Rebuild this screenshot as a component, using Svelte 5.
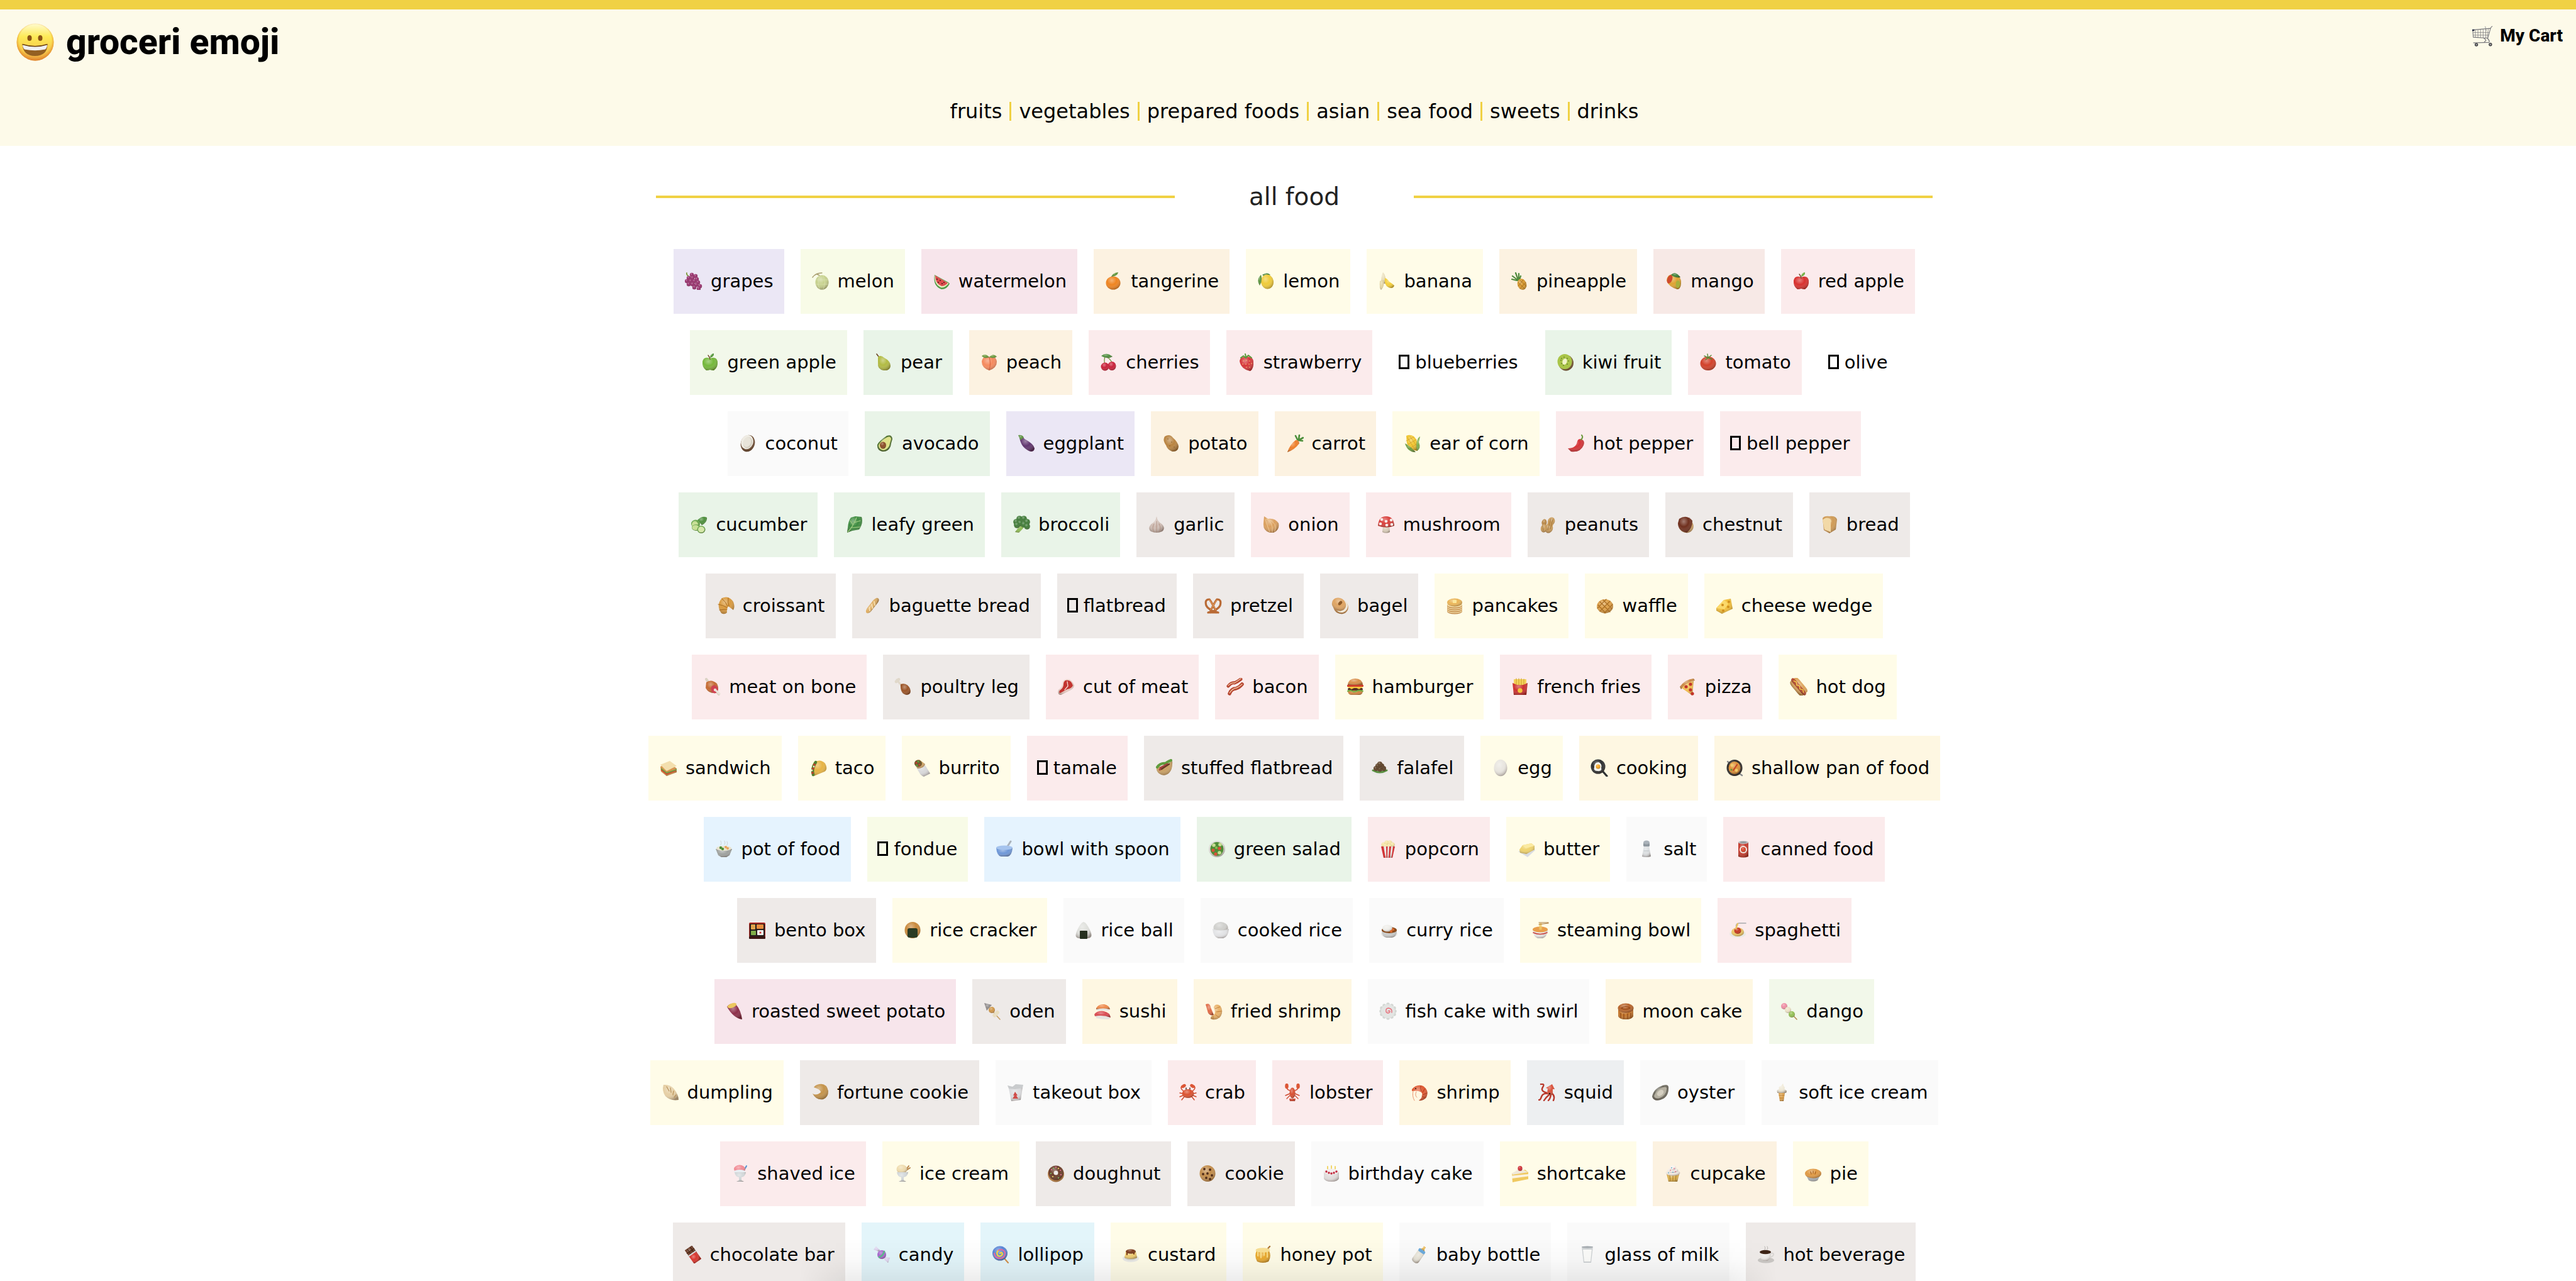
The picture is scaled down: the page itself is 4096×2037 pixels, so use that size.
<script>
  const c = (x, y, r, f) => `<circle cx="${x}" cy="${y}" r="${r}" fill="${f}"/>`;
  const e = (x, y, rx, ry, f, a = 0) =>
    `<ellipse cx="${x}" cy="${y}" rx="${rx}" ry="${ry}" fill="${f}" transform="rotate(${a} ${x} ${y})"/>`;
  const b = (x, y, rx, ry, f, a = 0) => e(x, y, rx, ry, f, a) + e(x, y, rx, ry, 'url(#shade)', a);
  const p = (d, f) => `<path d="${d}" fill="${f}"/>`;
  const s = (d, f) => p(d, f) + p(d, 'url(#shade)');
  const l = (d, f, w = 1.5) =>
    `<path d="${d}" fill="none" stroke="${f}" stroke-width="${w}" stroke-linecap="round" stroke-linejoin="round"/>`;
  const r = (x, y, w, h, f, q = 0) => `<rect x="${x}" y="${y}" width="${w}" height="${h}" rx="${q}" fill="${f}"/>`;
  const dots = (pts, rad, f) => pts.map(([x, y]) => c(x, y, rad, f)).join('');
  const balls = (pts, rad, f) => pts.map(([x, y]) => b(x, y, rad, rad, f)).join('');
  const turn = (a, inner) => `<g transform="rotate(${a} 14 14)">${inner}</g>`;

  const bowl = (f) => s('M2 14H26Q26 25 18 26H10Q2 25 2 14Z', f);
  const glass = s('M5 12H23Q22 19 16 20V25L20 27H8L12 25V20Q6 19 5 12Z', '#d3d8da');
  const plate = e(14, 20, 13, 6, '#e9e9e6') + e(14, 19, 10, 4, '#d2d2ce');

  const icons = {
    grapes:
      l('M3 1Q2 4 7 7', '#7c9b3a', 1.8) +
      balls([[11, 4], [17, 6], [6, 9], [12, 9], [19, 11], [3, 14], [9, 14], [15, 14], [21, 16], [6, 19], [12, 19], [18, 20], [15, 24], [24, 22], [22, 26]], 3.2, '#97306c'),
    melon: l('M1 8Q6 1 16 1M12 5L8 3', '#a79d6d', 1.4) + b(16, 16, 10.5, 11.5, '#c6d18c') + l('M12 6Q8 16 12 26M18 5Q23 16 18 27M7 12H26M7 19H26', '#dde4b5', 0.6),
    watermelon: p('M3 4Q0 22 14 27Q23 27 27 18L25 16Z', '#4e9a45') + p('M3.500 5Q2 20 14 24.500Q21 24 25.500 17.500Z', '#e5eabf') + p('M4 5Q4 18 14 22Q20 22 24 17Z', '#de4c4f') + dots([[7, 11], [12, 13], [9, 16], [15, 18], [18, 16]], 0.9, '#3a1a14'),
    tangerine: b(13, 17, 11.5, 10.5, '#ef8420') + s('M10 7Q12 1 21 0Q20 6 10 7Z', '#5e9438'),
    lemon: s('M8 4Q16 -1 21 4L13 8Z', '#3f7f35') + b(16, 15, 10, 11.5, '#efcb3a', -10) + s('M6 4Q-2 12 4 21Q9 12 6 4Z', '#5b9440'),
    banana: s('M8 0Q13 4 12 18L5 18Q5 6 8 0Z', '#eadfba') + s('M3 14Q2 26 5 28Q11 22 9 12Z', '#e4d6a4') + s('M11 9Q15 10 18 15Q23 18 26 21Q24 27 17 24Q9 20 11 9Z', '#f4cf3a'),
    pineapple: l('M12 13L3 6M12 12L8 1M13 12L13 2M10 13L2 11M14 12L16 6', '#4f8a3c', 2.2) + b(18, 19, 7, 9, '#d99a2e', -20) + l('M12 16L22 26M15 13L25 22M12 22L20 12M15 26L24 16', '#9a6519', 0.8),
    mango: s('M3 13Q4 2 15 3Q27 6 26 18Q25 27 20 27Q6 23 3 13Z', '#dfa331') + e(8, 11, 4, 7, '#cf4a2e', 20) + e(21, 19, 3.5, 6, '#a8b03c') + s('M10 4Q17 -3 25 8Q15 9 10 4Z', '#3d8037'),
    apple: s('M14 8Q24 4 26 13Q27 22 20 27Q17 27 14 26Q11 27 8 27Q1 22 2 13Q4 4 14 8Z', '#d8312f') + l('M14 9Q13 5 11 3', '#6b4423', 1.4) + s('M14 7Q14 1 20 0Q21 5 14 7Z', '#6cae3a'),
    greenApple: s('M14 8Q24 4 26 13Q27 22 20 27Q17 27 14 26Q11 27 8 27Q1 22 2 13Q4 4 14 8Z', '#74b83a') + l('M14 9Q13 5 11 3', '#6b4423', 1.4) + s('M14 7Q14 1 20 0Q21 5 14 7Z', '#4e9436'),
    pear: l('M6 5L3 1', '#6b4423', 1.6) + s('M5 5Q10 2 15 7Q25 12 25 20Q24 28 14 27Q4 25 5 16Z', '#b2bb43'),
    peach: s('M14 6Q24 2 26 13Q26 23 14 27Q2 23 2 13Q4 2 14 6Z', '#f58a5e') + l('M14 6Q17 16 14 26', '#d35f3c', 1) + s('M2 4Q8 -1 14 6Q6 9 2 4Z', '#6a9a3b') + s('M26 5Q20 -1 14 6Q22 9 26 5Z', '#6a9a3b'),
    cherries: l('M8 5Q6 12 8 17M10 5Q17 9 20 16', '#6f8f39', 1.3) + s('M2 4Q10 -3 20 5Q11 10 2 4Z', '#4f8e3e') + b(8, 21, 6.5, 6.5, '#c9213a') + b(19, 20, 6.5, 7, '#c9213a'),
    strawberry: s('M3 12Q4 5 14 5Q25 6 25 12Q26 24 20 28Q5 25 3 12Z', '#d6373b') + dots([[9, 12], [14, 11], [19, 12], [8, 17], [13, 17], [18, 17], [22, 16], [14, 22], [19, 22]], 0.8, '#f6cf7d') + l('M5 7L9 4L13 7L17 3L22 7M13 5L12 1', '#5c9a3a', 2),
    kiwi: b(15, 15, 12, 12.5, '#7a5a33') + e(13, 13, 11.5, 12, '#a9c548') + e(13, 13, 3.5, 5, '#f2f3cb', 20) + dots([[7, 11], [8, 16], [11, 19], [17, 17], [19, 12], [17, 8], [12, 6], [8, 8]], 0.7, '#37401c'),
    tomato: b(14, 16, 12.5, 11, '#d2402a') + l('M14 7L8 4M14 7L19 3M14 7L13 1M14 7L10 10M14 7L20 9', '#5a8c38', 1.5),
    coconut: b(14, 14, 11, 13.5, '#6c4a30', 20) + e(13, 12, 9.5, 11.5, '#efece4', 20) + e(14, 13, 7, 9, '#d5d0c2', 20) + e(13, 12, 6, 8, '#e8e4da', 20),
    avocado: s('M17 2Q25 -1 26 7Q24 13 23 19Q19 28 10 27Q1 25 2 16Q5 10 17 2Z', '#4d702c') + p('M18 4Q23 2 24 7Q22 13 21 18Q17 25 11 25Q4 23 4 17Q7 10 18 4Z', '#dfe28a') + b(11, 17, 5, 5.5, '#8a4b23'),
    eggplant: s('M3 4Q8 2 11 7Q26 15 27 22Q26 29 18 26Q5 20 3 4Z', '#61356f') + s('M1 1Q8 0 10 5Q7 6 5 9Q3 6 1 1Z', '#5d9142'),
    potato: s('M4 3Q12 -2 17 5Q25 12 26 19Q25 28 16 27Q8 24 6 17Q0 9 4 3Z', '#b98441') + dots([[9, 7], [15, 12], [12, 18], [19, 20]], 0.8, '#8a5b26'),
    carrot: l('M18 8L15 2M20 8L21 1M20 9L27 5M19 9L26 10', '#4b8f3a', 2.6) + s('M15 9Q20 8 21 14Q14 24 2 28Q6 16 15 9Z', '#ee7f2a'),
    corn: s('M4 2Q14 -2 20 8Q24 18 22 26Q10 25 5 14Z', '#f1c733') + l('M6 5L18 24M10 3L22 20M4 10L16 4M6 16L20 8M11 21L22 14', '#cf9a1f', 0.7) + s('M2 14Q10 18 19 28Q6 28 2 14Z', '#6a9a3e') + s('M26 3Q18 8 21 26Q28 22 24 12Z', '#7fae4b'),
    pepper: s('M21 7Q29 9 26 17Q21 29 6 27L1 22Q14 22 16 11Q17 7 21 7Z', '#d53337') + l('M22 8Q26 4 23 1', '#6c9a3c', 2),
    cucumber: s('M12 7Q20 -1 27 3Q28 10 19 15Z', '#4d8f3c') + b(9, 13, 7, 6.5, '#66a446') + e(8, 14, 5, 5, '#c8df97') + b(10, 19, 7, 5, '#66a446') + e(9, 19, 5.5, 4, '#c8df97') + b(18, 22, 6.5, 6, '#66a446') + e(18, 22, 5, 4.6, '#d6e8ab'),
    leafy: s('M9 3L16 1L26 2Q29 12 22 22L11 24L3 27L4 19Q5 8 9 3Z', '#3d8b3f') + l('M4 26Q12 18 18 3M9 19L24 18M12 14L8 8M14 11L24 8', '#a5cf85', 1.1),
    broccoli: s('M12 14H18L17 20L10 27L4 26Q9 20 12 14Z', '#8dbb55') + balls([[6, 10], [11, 5], [18, 5], [23, 10], [12, 12], [18, 14], [23, 17], [7, 15]], 4.8, '#3f7a37'),
    garlic: s('M14 1Q15 9 22 13Q29 20 23 25Q14 29 5 25Q-1 20 6 13Q13 9 14 1Z', '#cfbdb4') + l('M14 9V26M10 13Q6 20 10 26M18 13Q22 20 18 26', '#a98878', 0.8),
    onion: s('M3 1L9 5Q20 3 26 12Q28 23 18 27H12Q1 24 2 12Z', '#dba05f') + l('M6 5Q18 10 16 26M5 6Q8 16 12 26M8 5Q26 12 20 25', '#f3d0a0', 0.8),
    mushroom: s('M9 16H19L20 26Q14 29 8 26Z', '#d8ccb9') + s('M1 16Q2 1 14 1Q26 1 27 16Q14 21 1 16Z', '#d9403c') + dots([[7, 6], [14, 9], [22, 7], [5, 13], [23, 14], [15, 15]], 2.3, '#f7ece8'),
    peanuts: turn(25, b(17, 7, 5.5, 6.5, '#c99b5a') + b(18, 19, 6.5, 7.5, '#c99b5a') + r(13, 9, 9, 6, '#c99b5a', 2)) + turn(10, b(8, 12, 4, 5.5, '#b88746') + b(9, 21, 5, 6.5, '#c99b5a')) + l('M6 16L7 24M19 5L14 23M22 6L18 21', '#8f6630', 0.7),
    chestnut: b(15, 16, 12, 11, '#c59b62', 30) + s('M4 5Q16 -3 25 8Q25 20 16 27Q2 24 2 12Z', '#6f2f1d'),
    bread: s('M3 4Q6 0 14 1Q24 0 26 6L24 22L14 28L5 23Z', '#cf9b56') + p('M3 7Q8 1 15 5Q18 8 16 11V26L6 22Z', '#f2d9a7'),
    croissant: s('M8 2Q19 -3 26 8Q29 16 26 21Q22 18 18 15Q15 19 16 25Q12 29 7 26Q-2 13 8 2Z', '#d99a3e') + l('M8 3Q14 8 17 15M18 2Q17 9 19 15M2 12Q9 13 16 17M4 21Q10 20 16 20', '#a86a1f', 1),
    baguette: turn(-52, s('M-1 14Q0 10 8 10H22Q29 11 29 14Q29 18 22 18H6Q0 18 -1 14Z', '#dfae63') + l('M5 16L9 12M11 17L15 12M17 17L21 12', '#f8e3b6', 1.6)),
    pretzel: l('M9 25Q14 12 20 4Q28 4 25 14Q22 21 6 25M19 25Q14 12 8 4Q0 4 3 14Q6 21 22 25M8 25H20', '#b96a35', 3.2) + l('M10 21Q14 12 20 5M18 21Q14 12 8 5', '#dd9558', 1.2),
    bagel: b(15, 16, 12, 11, '#c98f50', 30) + e(16, 15, 10, 10, '#f1eadb', 30) + b(12, 12, 11.5, 10, '#dfa462', 30) + e(14, 10, 2.5, 4, '#8e5a28', 40),
    pancakes: [23, 20, 17, 14].map((y) => e(14, y, 12, 4.5, '#b97c39') + e(14, y - 1, 12, 4.3, '#f1d9a4')).join('') + b(14, 9, 12, 6.5, '#eab558') + r(11, 5, 6, 5, '#fbe79b', 1),
    waffle: b(14, 15, 13, 11, '#dda04a') + l('M6 8L22 24M11 5L25 19M3 13L15 26M22 7L6 23M26 12L13 26M16 4L2 18', '#a96d22', 1.2),
    cheese: s('M1 18L13 5L24 3L27 19L10 27L1 22Z', '#f3bf3a') + p('M1 18L13 5L20 11L14 20Z', '#fbd96b') + dots([[11, 13], [20, 16], [12, 22], [21, 8]], 2, '#d08f1d'),
    meat: l('M5 2L10 9M20 20L25 26', '#dbd3c4', 4) + s('M5 7Q13 1 22 9Q27 20 19 24Q9 25 4 16Z', '#c46a31') + e(18, 18, 5.5, 6.5, '#cf4352', -20) + c(19, 19, 2.2, '#f2d8cb') + l('M19 19L26 25', '#e9e4da', 3),
    poultry: l('M4 3L12 13', '#e0d8ca', 3.4) + c(3, 6, 2.4, '#e0d8ca') + c(7, 2.5, 2.4, '#e0d8ca') + s('M10 10Q20 7 25 17Q28 26 20 27Q9 26 10 10Z', '#9b5427'),
    steak: s('M12 3Q22 -1 27 12Q26 18 18 21L6 27Q0 27 2 19Q7 16 8 10Q8 5 12 3Z', '#eccfc6') + p('M13 4Q22 2 25 12Q23 17 16 18L5 24Q2 24 4 20Q10 16 10 10Q10 6 13 4Z', '#c23430') + l('M16 6L17 13L12 19', '#f3d3cc', 1.4),
    bacon: l('M3 13Q8 7 13 8Q18 6 23 2', '#b5442f', 5) + l('M3 12Q8 7 13 8Q18 5 23 1', '#f0c3a0', 1.3) + l('M5 25Q8 17 15 17Q21 15 25 10', '#b5442f', 5.5) + l('M5 24Q9 17 16 16Q21 14 25 10', '#f0c3a0', 1.4),
    burger: s('M2 11Q3 1 14 1Q25 1 26 11Z', '#d98f4a') + s('M2 20H26Q26 27 20 27H8Q2 27 2 20Z', '#d08541') + r(1, 11, 26, 3, '#cf3e2b', 1) + p('M1 14H27L20 18H7Z', '#f5c63f') + r(2, 16, 24, 4, '#54301f', 2) + p('M2 14H26L20 18L14 15L8 18Z', '#f5c63f') + l('M2 21Q6 19 9 21T16 21T26 21', '#74b043', 2),
    fries: r(4, 2, 20, 12, '#f4d25c', 1) + l('M8 1V12M12 1V12M16 1V12M20 2V12', '#cc9d2b', 1) + s('M2 8Q14 15 26 8L24 27H4Z', '#cc2f2f') + c(14, 20, 3.8, '#f1c63c'),
    pizza: s('M1 14Q10 2 23 1L25 4Q12 7 3 18Z', '#c98743') + s('M4 16Q12 7 23 5L21 28Z', '#f0bd50') + dots([[11, 14], [18, 10], [18, 19], [21, 25]], 2.6, '#c3342a'),
    hotdog: turn(50, s('M-1 9Q0 6 6 6H22Q28 6 29 9V19Q28 22 22 22H6Q0 22 -1 18Z', '#dca35a') + s('M-3 14Q-3 11 2 11H26Q31 11 31 14Q31 17 26 17H2Q-3 17 -3 14Z', '#b4482d') + l('M2 14L6 12L10 15L14 12L18 15L22 12L26 14', '#f5d348', 1.3)),
    sandwich: s('M1 12L15 6L27 15V21L11 27L2 20Z', '#d69348') + p('M2 17L11 24L27 18V16L11 21L2 14Z', '#6aa445') + p('M2 18L11 25L26 19V18L11 23L2 16Z', '#d0452f') + p('M1 9L16 3L27 11L11 19Z', '#f3dfae'),
    taco: s('M7 5Q18 -1 25 7Q30 16 24 20L7 27Q-1 20 7 5Z', '#e7b443') + l('M6 25Q3 16 10 5', '#4f7f30', 4.5) + dots([[5, 22], [6, 15], [8, 9]], 1.8, '#c93b2e') + dots([[4, 18], [7, 12]], 1.4, '#f2e6c9'),
    burrito: s('M3 10L18 8L27 23L17 28Q12 26 10 22Z', '#d8d8da') + s('M2 8Q2 1 10 1L19 8Q17 15 7 15Z', '#cfa467') + e(8, 7, 6, 5.5, '#6c5a30', 20) + dots([[5, 6], [10, 9]], 1.6, '#c93b2e') + dots([[8, 4], [6, 10]], 1.6, '#61a03c'),
    pita: s('M2 13Q14 12 27 3Q28 16 22 22Q14 29 6 23Q1 19 2 13Z', '#caa164') + l('M3 13Q8 6 16 7Q22 3 25 2', '#5f9c3d', 4) + l('M8 14L19 8M7 17L13 13', '#a8453f', 3) + l('M10 16L22 8', '#6b3a23', 2.4),
    falafel: plate + l('M3 18Q14 24 25 18', '#5a9140', 3) + balls([[8, 15], [14, 16], [20, 15], [11, 11], [17, 11], [14, 8]], 4, '#5d4126'),
    egg: b(14, 14, 10.5, 13.2, '#e9e6e0'),
    cooking: l('M19 19L26 27', '#2f3234', 3.2) + b(12, 12, 11.5, 11.5, '#2c2f31') + p('M6 13Q6 5 13 5Q19 8 17 14Q19 20 11 19Q4 19 6 13Z', '#f4f4ef') + b(12, 12, 3.5, 3.5, '#f5a623'),
    pan: l('M3 4L8 8M20 22L26 26', '#8b8d8f', 2.4) + b(14, 14, 12.5, 13, '#2d2a28') + b(14, 14, 9.5, 10, '#dd8f35') + dots([[10, 10], [17, 18]], 2.4, '#f3c96a') + l('M12 18L18 9', '#c2402a', 2) + c(9, 17, 1.5, '#5c983d'),
    potFood: l('M9 8Q11 5 9 1M15 7Q17 4 15 1M19 8Q21 5 19 2', '#cfd2d4', 1) + s('M1 14H27L23 24L18 27H10L5 24Z', '#9ea19e') + e(14, 13, 12, 4, '#e9e3cf') + dots([[9, 12], [12, 14]], 2.2, '#4f8f3b') + dots([[17, 11], [20, 13]], 2, '#e7a25b'),
    bowlSpoon: l('M17 13L24 2', '#aab2bb', 3) + s('M1 12H27Q26 25 19 26H9Q2 25 1 12Z', '#6d97d8') + e(14, 12, 13, 3.5, '#a6c4ee'),
    salad: b(14, 14, 13, 13, '#dcdcd6') + e(14, 14, 10.5, 11, '#4f8c36') + dots([[9, 8], [18, 20], [19, 7]], 2.8, '#c6dd93') + dots([[8, 16], [18, 13], [12, 22]], 2.6, '#d8503a') + dots([[13, 12]], 2, '#8fbc4e'),
    popcorn: balls([[7, 7], [12, 4], [17, 4], [21, 7], [10, 9], [16, 9]], 3.6, '#f4e3a4') + s('M3 10H25L21 28H7Z', '#e9e6e2') + p('M3 10H7L10 28H7ZM11 10H13.500L13 28H11.500ZM16 10H19L17 28H15ZM22 10H25L21 28H19.500Z', '#d23436'),
    butter: p('M1 18L16 27L28 16L22 12Z', '#d9dce2') + s('M3 15L8 8L22 5L27 9V15L14 22L4 20Z', '#efd36c') + p('M8 8L22 5L27 9L13 13Z', '#fbeaa1'),
    salt: s('M10 9H18L21 26Q14 28 7 26Z', '#dcdfe1') + r(9, 4, 10, 6, '#8f989f', 1.5) + e(14, 3.5, 5, 3, '#aab2b9') + l('M10 17H18', '#bcc2c6', 1),
    can: s('M6 3H22V26Q14 29 6 26Z', '#c5392c') + e(14, 3.5, 8, 2.5, '#c3c6c8') + e(14, 3.5, 5.5, 1.4, '#95999c') + e(14, 15, 6, 6, '#f2e9e2') + b(14, 15, 4, 4, '#d8442c'),
    bento: r(1, 2, 26, 24, '#b02a22', 2) + r(2, 4, 24, 20, '#241d1b', 1) + r(4, 5, 7, 8, '#e0a34b', 1) + r(13, 5, 11, 7, '#e98d3e', 1) + r(4, 15, 8, 7, '#7eae48', 1) + r(14, 14, 10, 8, '#efefeb', 1) + c(19, 18, 1.5, '#cf3030') + r(1, 24, 26, 4, '#3a1613', 1),
    riceCracker: b(14, 14, 12.5, 13, '#c98a3c') + r(6, 11, 16, 15, '#2a3b23', 3),
    riceBall: s('M14 1Q19 2 25 16Q29 26 22 27H6Q-1 26 3 16Q9 2 14 1Z', '#dfe0dc') + r(8, 15, 12, 13, '#26301f', 1),
    cookedRice: b(14, 10, 11.5, 9, '#d0d0cd') + s('M1 12Q14 17 27 12Q26 25 18 27H10Q2 25 1 12Z', '#e2e3e5'),
    curry: plate + bowl('#c8c9c8') + e(14, 14, 12, 5, '#8a4c1e') + b(11, 11, 8, 5.5, '#efeeea') + dots([[20, 13], [17, 16]], 2, '#dc6a2c'),
    steaming: s('M2 13H26Q25 25 18 27H10Q3 25 2 13Z', '#e6e4e2') + e(14, 13, 12, 4.5, '#e99e4a') + l('M3 18Q14 23 25 18', '#c8433c', 1.6) + l('M13 13V3M16 13V3M14.500 13V3', '#efc96b', 1.2) + l('M12 2H27M12 5L27 3', '#a9793d', 1.2),
    spaghetti: plate + b(14, 17, 10, 7, '#ecc564') + b(14, 15, 5.5, 5, '#c6351f') + l('M12 10Q10 3 17 3H27', '#a6a9ab', 1.6) + l('M11 12L14 4', '#ecc564', 2.4),
    sweetPotato: s('M2 7Q7 0 16 3Q24 12 26 27Q12 25 2 7Z', '#8d2f4a') + e(10, 5, 7.5, 3.5, '#ecc85f', -20),
    oden: l('M4 3L26 27', '#c9a063', 1.6) + s('M1 1L13 4L5 13Z', '#8e8a8a') + b(13, 12, 5, 5, '#cf9748') + turn(-45, r(9, 18, 12, 6, '#e9dfc2', 2)),
    sushi: r(4, 9, 22, 4, '#e6e5e0', 2) + s('M4 9Q8 2 17 3Q25 5 26 11Q15 8 4 11Z', '#ef8a4b') + p('M3 20Q14 18 26 23Q27 27 22 27Q12 27 4 25Z', '#e6e5e0') + s('M1 19Q5 13 16 14Q26 16 27 24Q14 19 2 22Z', '#d94a50'),
    friedShrimp: s('M1 3Q8 0 9 8L14 20Q9 22 5 17Z', '#e06a45') + s('M14 8Q16 1 24 5Q30 13 25 22Q18 30 9 26Q9 21 14 20Q18 17 14 8Z', '#e9b268') + l('M16 10L24 7M18 15L26 14M17 20L23 24M13 22L13 27', '#bd7a33', 0.9),
    fishCake: dots([[14, 3], [20, 5], [24, 9], [25, 14], [24, 19], [20, 23], [14, 25], [8, 23], [4, 19], [3, 14], [4, 9], [8, 5]], 2.7, '#d3d7d3') + e(14, 14, 11, 11, '#e3e5e3') + l('M14 14Q17 12 17 15Q14 19 11 15Q10 9 15 9Q21 10 20 16', '#e8707b', 1.5),
    moonCake: s('M2 9H26V22Q24 27 14 27Q4 27 2 22Z', '#c5772c') + b(14, 9, 12.5, 7.5, '#b8642a') + l('M7 9Q14 4 21 9Q14 13 7 9M6 17V24M11 18V26M17 18V26M22 17V24', '#8d4516', 1.2),
    dango: l('M4 4L26 27', '#b58a4f', 1.6) + b(6, 6, 5, 5, '#ef8fa5') + b(12, 12, 5, 5, '#ece2c6') + b(18, 19, 5, 5, '#92bf52'),
    dumpling: s('M3 2Q14 1 20 9Q27 18 27 26Q14 28 6 20Q0 11 3 2Z', '#e6cfa4') + l('M8 5L12 12M14 7L15 14M19 12L18 18M23 18L20 22', '#b8935a', 1.3),
    fortune: s('M9 2Q24 -3 27 12Q27 22 19 25Q8 27 2 16Q8 20 15 14Q15 9 4 6Q6 3 9 2Z', '#c4934a'),
    takeout: s('M3 8L25 6L22 26L7 28Z', '#dbdcde') + p('M3 8L1 3L9 5L14 1L26 2L25 7L13 9Z', '#c9cbcd') + p('M13 13L17 19L15 19L18 24H9L12 19H10Z', '#cf4c48'),
    crab: l('M7 12Q1 8 4 4M21 12Q27 8 24 4M6 16L1 15M22 16L27 15M6 19L1 21M22 19L27 21M8 21L4 26M20 21L24 26', '#cf4629', 1.5) + e(7, 4, 4, 2.6, '#dc5636', -30) + e(21, 4, 4, 2.6, '#dc5636', 30) + b(14, 16, 9.5, 7, '#db5130') + l('M11 9V7M17 9V7', '#3a1a14', 1.4),
    lobster: l('M10 11Q4 10 5 3M18 11Q24 10 23 3M10 16L3 19M18 16L25 19M10 19L5 24M18 19L23 24', '#cf4a30', 1.4) + e(5, 4, 2.8, 4.2, '#dc5636') + e(23, 4, 2.8, 4.2, '#dc5636') + b(14, 15, 4.5, 8.5, '#d84f31') + s('M9 24H19L18 28H10Z', '#c5402a'),
    shrimp: s('M2 9Q10 0 20 4Q30 11 25 22Q20 28 13 27Q20 22 18 15Q14 10 2 12Z', '#df5a33') + l('M16 4Q15 8 17 12M23 8L19 14M26 15L19 18M23 23L18 20', '#a83418', 0.9) + l('M4 12Q2 20 6 27M9 13Q6 19 10 22', '#e78a63', 0.9) + c(8, 8, 1, '#2b1712'),
    squid: l('M15 16Q7 15 5 21T1 26M17 18Q12 22 9 27M20 18Q19 24 16 27M22 16Q27 20 24 27M14 15Q3 12 7 6T4 1', '#b9392c', 2.4) + s('M14 16L15 8L12 7L22 1L26 9L23 9L23 17Q18 21 14 16Z', '#d9523c') + c(18, 16, 1.3, '#2b1712'),
    oyster: s('M18 3Q28 0 27 8Q27 22 14 26Q4 29 1 21Q3 8 18 3Z', '#6d6a5e') + p('M18 6Q25 4 24 9Q23 19 13 23Q6 25 4 20Q7 10 18 6Z', '#b5b0a1') + e(14, 15, 6, 4, '#d5cfc1', -40),
    softIce: s('M9 15H19L17 28H11Z', '#dda351') + s('M7 14Q5 10 10 9Q8 5 13 4L16 0Q17 4 18 5Q20 7 18 9Q24 11 21 15H7Z', '#f0ead8') + l('M10 19H18M11 23H17', '#b57a2c', 0.9),
    shavedIce: l('M19 11L24 2', '#4f8fd0', 2) + b(13, 7, 9, 6.5, '#f28b95') + e(13, 11, 9, 3, '#e9eef2') + glass,
    iceCream: l('M19 9L24 2M20 9L26 5', '#b78346', 2) + b(13, 7, 8.5, 7, '#efdcae') + glass,
    doughnut: b(14, 15, 13, 12.5, '#c28545') + e(14, 13, 12, 11.5, '#6a3c28') + e(14, 13, 12, 11.5, 'url(#shade)') + dots([[7, 8], [14, 4], [21, 9], [22, 16]], 1.1, '#e8739a') + dots([[10, 6], [6, 14], [18, 21]], 1.1, '#7cc36a') + dots([[18, 6], [9, 19]], 1.1, '#f4dd65') + c(14, 13, 3.5, '#efebe8'),
    cookie: b(14, 14, 12.5, 13, '#c28d4c') + dots([[9, 7], [18, 8], [7, 15], [14, 14], [21, 17], [12, 21], [18, 23]], 1.9, '#512d1a'),
    birthday: l('M8 9V3M14 9V2M20 9V3', '#f0d25a', 1.8) + s('M2 11H26V22Q24 27 14 27Q4 27 2 22Z', '#e0dcdb') + e(14, 11, 12, 4.5, '#f3efed') + dots([[6, 11], [10, 13], [14, 14], [18, 13], [22, 11]], 1.7, '#c0243a'),
    shortcake: p('M1 14L22 8L27 12V23L2 28Z', '#f0c960') + p('M1 17.500L27 15V18.500L1 22Z', '#fbf3e0') + p('M1 14L14 6L27 12L2 16Z', '#f0e8d8') + b(14, 6, 3.6, 4, '#cf2f36'),
    cupcake: s('M4 15H24L21 27H7Z', '#d9ad4c') + l('M9 17L10 26M14 17V26M19 17L18 26', '#a87b27', 1) + b(14, 13, 11.5, 4.5, '#f1e9e1') + b(14, 9, 8.5, 4, '#f5eee7') + b(14, 5, 5, 4, '#f8f2ec') + dots([[10, 9], [16, 6], [18, 11]], 0.9, '#e16a86') + dots([[12, 5], [7, 13], [14, 12]], 0.9, '#65aac9'),
    pie: s('M3 17H25L21 25Q14 28 7 25Z', '#a5a9ac') + b(14, 14, 13, 7.5, '#e09a44') + l('M14 10V14M10 11L11 15M18 11L17 15', '#a7611d', 1.2),
    chocolate: turn(-35, s('M7 1H21V14H7Z', '#6b3b27') + l('M11.500 2V12M17 2V12M7 7H21', '#43210f', 1) + r(7, 11, 14, 3, '#d5d8da') + s('M7 13H21V27H7Z', '#d8342c')),
    candy: s('M9 9L1 6L5 1L11 7Z', '#ddd2ee') + s('M19 18L27 19L24 27L18 22Z', '#ddd2ee') + b(14, 14, 7, 7, '#a868d0') + l('M10 18Q16 16 18 9', '#58c28a', 2.6),
    lollipop: l('M19 19L26 27', '#d08f4a', 2) + b(13, 12, 12, 11.5, '#5a86d8') + l('M13 12Q16 9 17 13Q15 18 10 16Q6 11 11 7', '#f2d548', 2.4) + l('M11 7Q18 4 21 11Q21 19 14 20Q5 20 4 12', '#e26fa3', 2.2),
    custard: plate + s('M6 9H22L24 19Q14 23 4 19Z', '#f0cd70') + b(14, 9, 8, 3.5, '#7d3a1a') + l('M8 11V14M19 11V13', '#7d3a1a', 2),
    honey: l('M19 8L25 1', '#b07b3a', 2.4) + s('M4 8H24Q28 17 23 25Q14 29 5 25Q0 17 4 8Z', '#eaa92b') + e(14, 7, 11.5, 3.8, '#f8df93') + l('M6 9V16M11 10V19M16 10V15M21 9V18', '#fbe28f', 1.8),
    baby: turn(35, s('M8 9H20V24Q20 29 14 29Q8 29 8 24Z', '#e8e4d8') + r(8, 5, 12, 5, '#6cabdd', 2) + s('M10 5Q13 4 12 -1H16Q15 4 18 5Z', '#eab850')),
    milk: p('M5 1H23L20 27H8Z', '#cfd3d5') + p('M7 6H21L19 25H9Z', '#fbfbf9') + e(14, 2, 9, 1.5, '#a5abb0'),
    hot: l('M12 6Q14 4 12 1M16 6Q18 4 16 1', '#b7b4b1', 1) + e(14, 23, 13, 4.5, '#c8c5c2') + s('M4 10H22Q22 22 16 24H10Q4 22 4 10Z', '#eae8e6') + e(13, 10, 9, 3.2, '#3d2417') + l('M22 12Q28 11 25 16Q23 18 20 18', '#d9d6d3', 2)
  };

  const menu = ['fruits', 'vegetables', 'prepared foods', 'asian', 'sea food', 'sweets', 'drinks'];

  const rows = [
    [['grapes', 'violet', 'grapes'], ['melon', 'lime', 'melon'], ['watermelon', 'pink', 'watermelon'], ['tangerine', 'orange', 'tangerine'], ['lemon', 'yellow', 'lemon'], ['banana', 'yellow', 'banana'], ['pineapple', 'orange', 'pineapple'], ['mango', 'coral', 'mango'], ['red apple', 'red', 'apple']],
    [['green apple', 'leaf', 'greenApple'], ['pear', 'green', 'pear'], ['peach', 'orange', 'peach'], ['cherries', 'red', 'cherries'], ['strawberry', 'red', 'strawberry'], ['blueberries', 'plain'], ['kiwi fruit', 'green', 'kiwi'], ['tomato', 'red', 'tomato'], ['olive', 'plain']],
    [['coconut', 'grey', 'coconut'], ['avocado', 'green', 'avocado'], ['eggplant', 'violet', 'eggplant'], ['potato', 'orange', 'potato'], ['carrot', 'orange', 'carrot'], ['ear of corn', 'yellow', 'corn'], ['hot pepper', 'red', 'pepper'], ['bell pepper', 'red']],
    [['cucumber', 'green', 'cucumber'], ['leafy green', 'green', 'leafy'], ['broccoli', 'green', 'broccoli'], ['garlic', 'brown', 'garlic'], ['onion', 'red', 'onion'], ['mushroom', 'red', 'mushroom'], ['peanuts', 'brown', 'peanuts'], ['chestnut', 'brown', 'chestnut'], ['bread', 'brown', 'bread']],
    [['croissant', 'brown', 'croissant'], ['baguette bread', 'brown', 'baguette'], ['flatbread', 'brown'], ['pretzel', 'brown', 'pretzel'], ['bagel', 'brown', 'bagel'], ['pancakes', 'yellow', 'pancakes'], ['waffle', 'yellow', 'waffle'], ['cheese wedge', 'yellow', 'cheese']],
    [['meat on bone', 'red', 'meat'], ['poultry leg', 'brown', 'poultry'], ['cut of meat', 'red', 'steak'], ['bacon', 'red', 'bacon'], ['hamburger', 'yellow', 'burger'], ['french fries', 'red', 'fries'], ['pizza', 'red', 'pizza'], ['hot dog', 'yellow', 'hotdog']],
    [['sandwich', 'yellow', 'sandwich'], ['taco', 'yellow', 'taco'], ['burrito', 'yellow', 'burrito'], ['tamale', 'red'], ['stuffed flatbread', 'brown', 'pita'], ['falafel', 'brown', 'falafel'], ['egg', 'yellow', 'egg'], ['cooking', 'amber', 'cooking'], ['shallow pan of food', 'amber', 'pan']],
    [['pot of food', 'blue', 'potFood'], ['fondue', 'lime'], ['bowl with spoon', 'blue', 'bowlSpoon'], ['green salad', 'green', 'salad'], ['popcorn', 'red', 'popcorn'], ['butter', 'yellow', 'butter'], ['salt', 'grey', 'salt'], ['canned food', 'red', 'can']],
    [['bento box', 'brown', 'bento'], ['rice cracker', 'yellow', 'riceCracker'], ['rice ball', 'grey', 'riceBall'], ['cooked rice', 'grey', 'cookedRice'], ['curry rice', 'grey', 'curry'], ['steaming bowl', 'yellow', 'steaming'], ['spaghetti', 'red', 'spaghetti']],
    [['roasted sweet potato', 'pink', 'sweetPotato'], ['oden', 'brown', 'oden'], ['sushi', 'amber', 'sushi'], ['fried shrimp', 'amber', 'friedShrimp'], ['fish cake with swirl', 'grey', 'fishCake'], ['moon cake', 'amber', 'moonCake'], ['dango', 'leaf', 'dango']],
    [['dumpling', 'yellow', 'dumpling'], ['fortune cookie', 'brown', 'fortune'], ['takeout box', 'grey', 'takeout'], ['crab', 'red', 'crab'], ['lobster', 'red', 'lobster'], ['shrimp', 'amber', 'shrimp'], ['squid', 'slate', 'squid'], ['oyster', 'grey', 'oyster'], ['soft ice cream', 'grey', 'softIce']],
    [['shaved ice', 'red', 'shavedIce'], ['ice cream', 'yellow', 'iceCream'], ['doughnut', 'brown', 'doughnut'], ['cookie', 'brown', 'cookie'], ['birthday cake', 'grey', 'birthday'], ['shortcake', 'yellow', 'shortcake'], ['cupcake', 'orange', 'cupcake'], ['pie', 'yellow', 'pie']],
    [['chocolate bar', 'brown', 'chocolate'], ['candy', 'cyan', 'candy'], ['lollipop', 'cyan', 'lollipop'], ['custard', 'yellow', 'custard'], ['honey pot', 'yellow', 'honey'], ['baby bottle', 'grey', 'baby'], ['glass of milk', 'grey', 'milk'], ['hot beverage', 'brown', 'hot']]
  ];
</script>

<svg class="defs" aria-hidden="true">
  <defs>
    <radialGradient id="shade" cx="0.4" cy="0.3" r="0.75">
      <stop offset="0" stop-color="#fff" stop-opacity="0.38" />
      <stop offset="0.45" stop-color="#fff" stop-opacity="0" />
      <stop offset="1" stop-color="#1e0a00" stop-opacity="0.38" />
    </radialGradient>
    <linearGradient id="face" x1="0" y1="0" x2="0" y2="1">
      <stop offset="0" stop-color="#fffbd0" />
      <stop offset="0.35" stop-color="#fdea57" />
      <stop offset="0.75" stop-color="#f6c84a" />
      <stop offset="1" stop-color="#e79a3a" />
    </linearGradient>
    <radialGradient id="rim" cx="0.5" cy="0.46" r="0.54">
      <stop offset="0.8" stop-color="#e98f2f" stop-opacity="0" />
      <stop offset="1" stop-color="#dd7f2c" stop-opacity="0.9" />
    </radialGradient>
  </defs>
</svg>

<header>
  <div class="top">
    <a class="brand" href="#home">
      <svg viewBox="0 0 60 60" aria-hidden="true">
        <circle cx="30" cy="30" r="29.500" fill="url(#face)" />
        <circle cx="30" cy="30" r="29.500" fill="url(#rim)" />
        <ellipse cx="21" cy="23.500" rx="3.500" ry="4.500" fill="#8a5314" />
        <ellipse cx="38" cy="23.500" rx="3.500" ry="4.500" fill="#8a5314" />
        <path d="M9.500 33.500Q30 40 49.500 33.500Q49 52 29.500 52Q11 52 9.500 33.500Z" fill="#946022" />
        <path d="M10 34Q30 40 49 34Q49 39 46 41.500Q30 45 13 41.500Q10 39 10 34Z" fill="#f0f0f3" />
        <path d="M9.500 33.500Q30 40 49.500 33.500" fill="none" stroke="#6d4210" stroke-width="1.500" />
      </svg>
      <h1>groceri emoji</h1>
    </a>
    <a class="cart" href="#cart">
      <svg viewBox="0 0 40 40" fill="none" stroke="#77777c" aria-hidden="true">
        <path d="M39 1Q36 2 35 6L30 24L2 22L1 8L35 5" stroke-width="1.300" />
        <path d="M2 13H33M2 18H32M6 8V22M11 8V23M16 7V23M21 7V23M26 6V23M31 6L29 23M25 1L27 10" stroke-width="0.900" />
        <path d="M22 24Q30 28 23 31M29 24Q35 30 32 32L2 33" stroke-width="1.500" />
        <rect x="0" y="7" width="4" height="3" fill="#252b42" stroke="none" />
        <circle cx="8" cy="36.500" r="2.500" fill="#99999d" stroke="#38383c" stroke-width="1.500" />
        <circle cx="35" cy="36" r="2.500" fill="#99999d" stroke="#38383c" stroke-width="1.500" />
      </svg>
      My Cart
    </a>
  </div>
  <nav>
    {#each menu as item}
      <a href="#{item.replace(' ', '-')}">{item}</a>
    {/each}
  </nav>
</header>

<main>
  <h2>all food</h2>
  {#each rows as row}
    <ul>
      {#each row as [name, tone, icon]}
        <li>
          <button type="button" class="tile {tone}">
            {#if icon}
              <svg class="icon" viewBox="0 0 28 28" aria-hidden="true">{@html icons[icon]}</svg>
            {:else}
              <span class="blank"></span>
            {/if}
            {name}
          </button>
        </li>
      {/each}
    </ul>
  {/each}
</main>
<div class="fade"></div>

<style>
  :global(html) {
    scrollbar-width: none;
  }
  :global(body) {
    margin: 0;
    background: #fff;
    color: #000;
    font-family: 'DejaVu Sans', sans-serif;
  }
  a {
    color: inherit;
    text-decoration: none;
  }
  .defs {
    position: absolute;
    width: 0;
    height: 0;
  }
  header {
    box-sizing: border-box;
    border-top: 15px solid #f0d144;
    background: #fdfae9;
    padding-bottom: 40px;
  }
  .top {
    display: flex;
    justify-content: space-between;
    align-items: flex-start;
    padding: 12px 21px 0 26px;
    font-family: Roboto, 'Liberation Sans', sans-serif;
    font-weight: 800;
  }
  .brand {
    display: flex;
    align-items: center;
    gap: 19px;
  }
  .brand svg {
    width: 60px;
    height: 60px;
  }
  h1 {
    margin: 0;
    font-size: 57px;
    font-weight: 800;
    line-height: 80px;
  }
  .cart {
    display: flex;
    align-items: center;
    gap: 11px;
    padding-top: 10px;
    font-size: 28px;
    line-height: 40px;
  }
  .cart svg {
    width: 33px;
    height: 33px;
  }
  nav {
    display: flex;
    justify-content: center;
    padding: 55px 0 0 20px;
    font-size: 32px;
    line-height: 30px;
  }
  nav a {
    padding: 0 12px;
  }
  nav a + a {
    border-left: 3px solid #f0d144;
  }
  main {
    padding: 51px 0 20px 20px;
  }
  h2 {
    display: flex;
    align-items: center;
    justify-content: center;
    gap: 118px;
    max-width: 2030px;
    margin: 0 auto 53px;
    color: #222;
    font-size: 39px;
    font-weight: 400;
    line-height: 60px;
  }
  h2::before,
  h2::after {
    content: '';
    flex: 1;
    height: 4px;
    background: #f0d144;
  }
  ul {
    display: flex;
    justify-content: center;
    gap: 26px;
    margin: 0 0 26px;
    padding: 0;
    list-style: none;
  }
  .tile {
    display: flex;
    align-items: center;
    gap: 13px;
    height: 103px;
    padding: 0 17px 2px 18px;
    border: 0;
    color: inherit;
    font: inherit;
    font-size: 29px;
    white-space: nowrap;
  }
  .icon {
    width: 28px;
    height: 28px;
  }
  .blank {
    box-sizing: border-box;
    width: 17px;
    height: 23px;
    margin: 0 -4px 0 -2px;
    border: 3px solid #000;
  }
  .plain { background: #fff; }
  .violet { background: #ebe7f5; }
  .lime { background: #f8fbe7; }
  .pink { background: #f7e5eb; }
  .orange { background: #fcf2e1; }
  .yellow { background: #fffce8; }
  .coral { background: #f7e9e6; }
  .red { background: #fbebec; }
  .leaf { background: #f2f8ea; }
  .green { background: #e9f4e8; }
  .grey { background: #fafafa; }
  .brown { background: #eeeae8; }
  .amber { background: #fef7e2; }
  .blue { background: #e5f3fe; }
  .cyan { background: #e3f5fa; }
  .slate { background: #edeff1; }
  .fade {
    position: fixed;
    right: 31%;
    bottom: 0;
    left: 31%;
    height: 70px;
    background: linear-gradient(transparent, rgba(0, 0, 0, 0.02) 50%, rgba(0, 0, 0, 0.07));
    mask-image: linear-gradient(90deg, transparent, #000 80px, #000 calc(100% - 80px), transparent);
    pointer-events: none;
  }
</style>
